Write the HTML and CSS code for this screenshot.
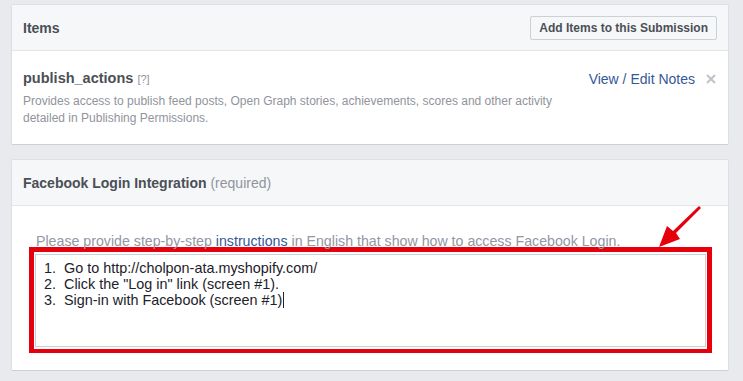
FILE: index.html
```html
<!DOCTYPE html>
<html lang="en">
<head>
    <meta charset="UTF-8">
    <meta name="viewport" content="width=device-width, initial-scale=1.0">
    <title>Submission Items</title>
    <link rel="stylesheet" href="styles.css">
</head>
<body>
    <div class="page">
        <div class="card">
            <div class="card-head">
                <h2>Items</h2>
                <button class="btn">Add Items to this Submission</button>
            </div>
            <div class="item">
                <div class="item-main">
                    <h3>publish_actions <span class="hint">[?]</span></h3>
                    <p>Provides access to publish feed posts, Open Graph stories, achievements, scores and other activity detailed in Publishing Permissions.</p>
                </div>
                <div class="item-side">
                    <a href="#">View / Edit Notes</a>
                    <svg class="close" width="10" height="10" viewBox="0 0 10 10"><path d="M1 1L9 9M9 1L1 9" stroke="#bec2c9" stroke-width="2"/></svg>
                </div>
            </div>
        </div>

        <div class="card login">
            <div class="card-head">
                <h2>Facebook Login Integration <span class="req">(required)</span></h2>
            </div>
            <div class="login-body">
                <p class="instr">Please provide step-by-step <a href="#">instructions</a> in English that show how to access Facebook Login.</p>
                <div class="mark">
                    <div class="steps">1.  Go to http://cholpon-ata.myshopify.com/
2.  Click the "Log in" link (screen #1).
3.  Sign-in with Facebook (screen #1)<span class="caret"></span></div>
                </div>
                <!-- red arrow drawn over the card -->
                <svg class="arrow" width="50" height="44" viewBox="0 0 50 44">
                    <path d="M43 1L45 3L20 28L24 34L3 42L11 21L17 26Z" fill="#e5000c"/>
                </svg>
            </div>
        </div>
    </div>
</body>
</html>
```

FILE: styles.css
```css
*{box-sizing:border-box;}
body{margin:0;background:#e9eaed;font-family:"Liberation Sans", Arial, Helvetica, sans-serif;color:#1d2129;}
.page{padding:4px 14px 10px 11px;}
.card{background:#fff;border:1px solid #dddfe2;border-bottom-color:#ccd0d5;border-radius:2px;}
.card + .card{margin-top:14px;}
.card-head{display:flex;align-items:center;justify-content:space-between;height:46px;padding:0 11px;background:#f6f7f9;border-bottom:1px solid #e5e5e5;}
.card-head h2{margin:0;font-size:14px;font-weight:bold;color:#4b4f56;}
.card-head .req{font-weight:normal;color:#90949c;}
.btn{height:24px;padding:0 8px;background:#f6f7f9;border:1px solid #ced0d4;border-radius:2px;font-family:inherit;font-size:12px;font-weight:bold;color:#4b4f56;}
.item{display:flex;justify-content:space-between;padding:19px 12px 17px 11px;}
.item h3{margin:0 0 7px;font-size:14.5px;font-weight:bold;color:#4b4f56;}
.item .hint{font-size:11px;font-weight:normal;color:#90949c;}
.item p{margin:0;width:545px;font-size:12px;line-height:17px;color:#90949c;}
.item-side{display:flex;align-items:center;gap:11px;height:18px;margin-top:0;}
.item-side a{font-size:14px;color:#365899;text-decoration:none;}
.login-body{position:relative;padding:28px 16px 17px 17px;}
.instr{margin:0 0 -1px;padding-left:7px;font-size:14.2px;line-height:14px;color:#9197a3;}
.instr a{color:#365899;text-decoration:none;}
.mark{height:106px;border:5px solid #e5000c;border-bottom-width:4px;padding:2px 1px 2px 1px;}
.steps{height:93px;padding:5px 8px;border:1px solid #ccd0d5;font-size:14.4px;line-height:16px;color:#1d2129;white-space:pre;}
.caret{display:inline-block;width:1px;height:16px;margin-left:1px;vertical-align:top;background:#1d2129;}
.arrow{position:absolute;top:-1px;right:22px;}
```
